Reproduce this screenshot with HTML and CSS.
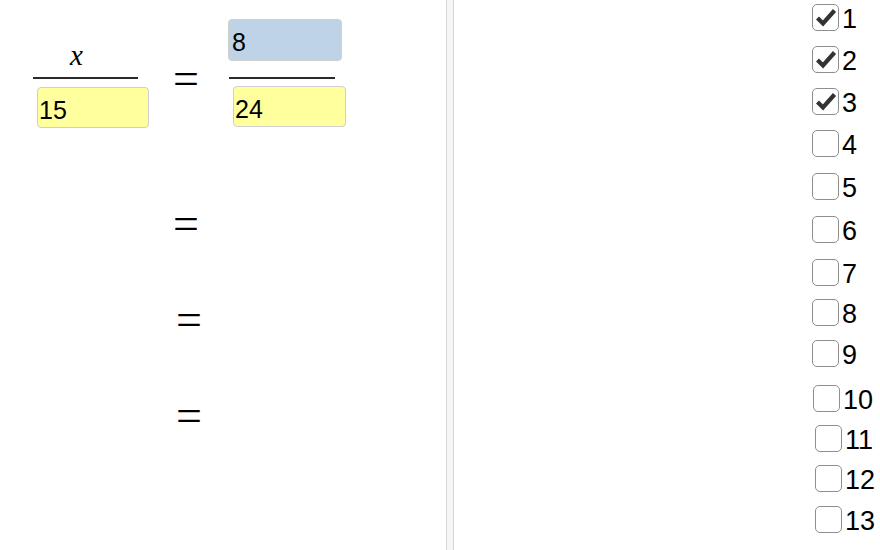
FILE: index.html
```html
<!DOCTYPE html>
<html lang="en">
<head>
<meta charset="utf-8">
<title>Proportions</title>
<link rel="stylesheet" href="styles.css">
</head>
<body>
<div class="app">
  <section class="left">
    <div class="row1">
      <div class="frac1">
        <div class="num"><span class="var">x</span></div>
        <div class="bar bar1"></div>
        <div class="inp yellow box1">15</div>
      </div>
      <div class="eq eq1">=</div>
      <div class="frac2">
        <div class="inp blue box2a">8</div>
        <div class="bar bar2"></div>
        <div class="inp yellow box2b">24</div>
      </div>
    </div>
    <div class="eqs">
      <div class="eq">=</div>
      <div class="eq shifted">=</div>
      <div class="eq shifted">=</div>
    </div>
  </section>
  <div class="divider"></div>
  <section class="right">
    <ul class="checks">
      <li class="cb"><span class="box"><svg viewBox="0 0 26 27" width="26" height="27"><path d="M4.5 14 L10 19.5 L21.5 6.5" /></svg></span><span class="lbl">1</span></li>
      <li class="cb"><span class="box"><svg viewBox="0 0 26 27" width="26" height="27"><path d="M4.5 14 L10 19.5 L21.5 6.5" /></svg></span><span class="lbl">2</span></li>
      <li class="cb"><span class="box"><svg viewBox="0 0 26 27" width="26" height="27"><path d="M4.5 14 L10 19.5 L21.5 6.5" /></svg></span><span class="lbl">3</span></li>
      <li class="cb h43"><span class="box"></span><span class="lbl">4</span></li>
      <li class="cb h43"><span class="box"></span><span class="lbl">5</span></li>
      <li class="cb h43"><span class="box"></span><span class="lbl">6</span></li>
      <li class="cb h40"><span class="box"></span><span class="lbl">7</span></li>
      <li class="cb h41"><span class="box"></span><span class="lbl">8</span></li>
      <li class="cb h45"><span class="box"></span><span class="lbl">9</span></li>
      <li class="cb h40 nudge1"><span class="box"></span><span class="lbl">10</span></li>
      <li class="cb h40 nudge2"><span class="box"></span><span class="lbl">11</span></li>
      <li class="cb h41 nudge2"><span class="box"></span><span class="lbl">12</span></li>
      <li class="cb nudge2"><span class="box"></span><span class="lbl">13</span></li>
    </ul>
  </section>
</div>
</body>
</html>
```

FILE: styles.css
```css
html, body {
  margin: 0;
  padding: 0;
  background: #ffffff;
}
body {
  width: 880px;
  height: 550px;
  overflow: hidden;
  font-family: "Liberation Sans", Arial, sans-serif;
  color: #000;
}
.app {
  display: flex;
  height: 550px;
}
.left {
  width: 446px;
  flex: none;
}
.divider {
  width: 6px;
  flex: none;
  background: #f6f6f6;
  border-left: 1px solid #d6d6d6;
  border-right: 1px solid #d6d6d6;
}
.right {
  flex: 1;
}

/* fraction row */
.row1 {
  display: flex;
  align-items: flex-start;
  padding-top: 19px;
}
.frac1 {
  margin-left: 33px;
  width: 116px;
}
.num {
  height: 58px;
  box-sizing: border-box;
  display: flex;
  align-items: flex-end;
  padding-left: 37px;
  padding-bottom: 6px;
}
.var {
  font-family: "Liberation Serif", "Times New Roman", serif;
  font-style: italic;
  font-size: 29px;
  line-height: 32px;
}
.bar {
  height: 2px;
  background: #2a2a2a;
}
.bar1 {
  width: 105px;
}
.inp {
  box-sizing: border-box;
  height: 41px;
  border: 1px solid #cfcfcf;
  border-radius: 4px;
  font-family: "Liberation Sans", Arial, sans-serif;
  font-size: 25px;
  line-height: 33px;
  padding: 6px 0 0 1px;
}
.yellow {
  background: #ffff9e;
}
.blue {
  background: #bed4e6;
}
.box1 {
  margin-top: 8px;
  margin-left: 4px;
  width: 112px;
}
.eq {
  width: 26px;
  height: 54px;
  font-family: "Liberation Serif", "Times New Roman", serif;
  font-size: 46px;
  line-height: 54px;
  text-align: center;
}
.eq1 {
  margin-left: 24px;
  margin-top: 33px;
}
.frac2 {
  margin-left: 29px;
}
.box2a {
  width: 114px;
  height: 42px;
  padding-left: 3px;
}
.bar2 {
  width: 106px;
  margin-left: 1px;
  margin-top: 16px;
}
.box2b {
  width: 113px;
  margin-left: 5px;
  margin-top: 7px;
}
.eqs {
  display: flex;
  flex-direction: column;
  gap: 42px;
  margin-left: 173px;
  margin-top: 69px;
}
.eq.shifted {
  margin-left: 3px;
}

/* checkbox list */
.checks {
  list-style: none;
  margin: 0;
  padding: 4px 0 0 358px;
}
.cb {
  display: flex;
  align-items: flex-start;
  height: 42px;
}
.cb.h40 { height: 40px; }
.cb.h41 { height: 41px; }
.cb.h43 { height: 43px; }
.cb.h45 { height: 45px; }
.cb.nudge1 { padding-left: 1px; }
.cb.nudge2 { padding-left: 3px; }
.box {
  box-sizing: border-box;
  width: 27px;
  height: 27px;
  border: 1.5px solid #8e8e8e;
  border-radius: 5px;
  background: #fff;
  display: flex;
  align-items: center;
  justify-content: center;
  flex: none;
}
.box svg {
  display: block;
  flex: none;
}
.box path {
  fill: none;
  stroke: #333333;
  stroke-width: 4.2;
  stroke-linejoin: miter;
  stroke-linecap: butt;
}
.lbl {
  margin-left: 3px;
  font-size: 27px;
  line-height: 27px;
  padding-top: 2px;
}
```
